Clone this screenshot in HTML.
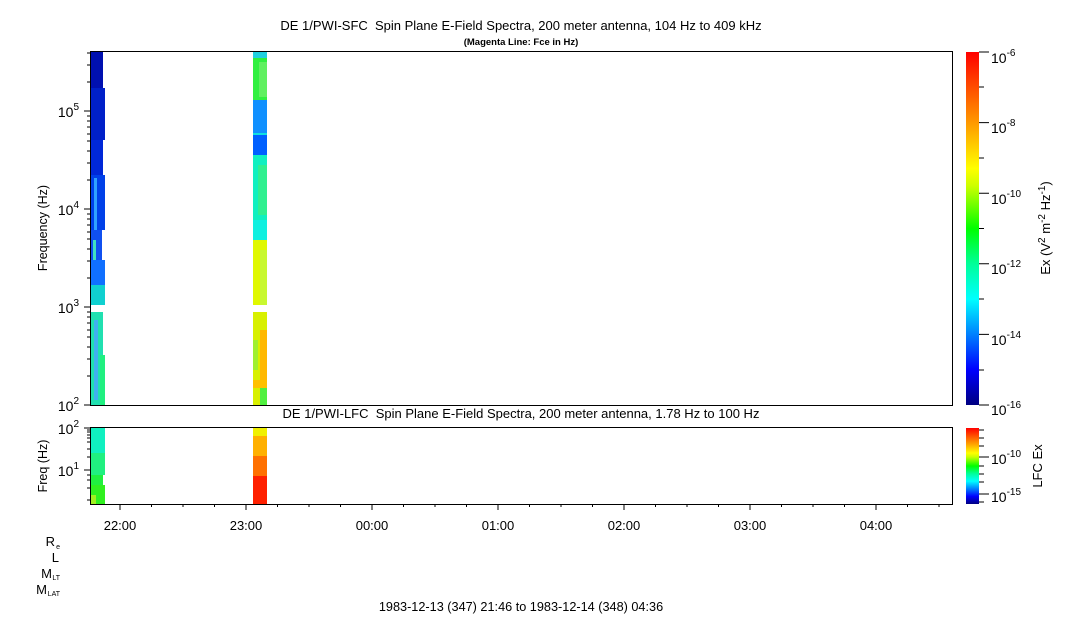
<!DOCTYPE html>
<html><head><meta charset="utf-8"><style>
html,body{margin:0;padding:0;background:#fff;}
svg text{font-family:"Liberation Sans",Arial,sans-serif;fill:#000;white-space:pre;}
</style></head><body>
<svg width="1083" height="620" xmlns="http://www.w3.org/2000/svg" xml:space="preserve">
<defs>
<linearGradient id="jet" x1="0" y1="1" x2="0" y2="0">
<stop offset="0" stop-color="#000080"/>
<stop offset="0.1" stop-color="#0000ff"/>
<stop offset="0.2" stop-color="#0080ff"/>
<stop offset="0.3" stop-color="#00ffff"/>
<stop offset="0.4" stop-color="#00ff99"/>
<stop offset="0.5" stop-color="#00ff00"/>
<stop offset="0.62" stop-color="#ccff00"/>
<stop offset="0.67" stop-color="#ffff00"/>
<stop offset="0.8" stop-color="#ff9900"/>
<stop offset="1" stop-color="#ff0000"/>
</linearGradient>
</defs>
<text x="521" y="30" font-size="13" text-anchor="middle">DE 1/PWI-SFC  Spin Plane E-Field Spectra, 200 meter antenna, 104 Hz to 409 kHz</text>
<text x="521" y="45" font-size="9.5" font-weight="bold" text-anchor="middle">(Magenta Line: Fce in Hz)</text>

<rect x="90" y="51" width="13" height="50" fill="#0010b0"/>
<rect x="90" y="88" width="15" height="52" fill="#0020c8"/>
<rect x="90" y="140" width="13" height="35" fill="#0028d8"/>
<rect x="90" y="175" width="15" height="55" fill="#0040e8"/>
<rect x="94" y="178" width="3" height="60" fill="#30a0ff"/>
<rect x="90" y="230" width="12" height="30" fill="#1050f0"/>
<rect x="93" y="240" width="3" height="30" fill="#40e0c0"/>
<rect x="90" y="260" width="15" height="30" fill="#1070ff"/>
<rect x="90" y="285" width="15" height="20" fill="#10d0d0"/>
<rect x="90" y="312" width="13" height="93" fill="#20e0b0"/>
<rect x="94" y="320" width="4" height="80" fill="#40b0f0"/>
<rect x="100" y="355" width="5" height="50" fill="#20f080"/>
<rect x="253" y="51" width="14" height="8" fill="#20d0e0"/>
<rect x="253" y="58" width="14" height="42" fill="#30f040"/>
<rect x="259" y="62" width="8" height="35" fill="#60f060"/>
<rect x="253" y="100" width="14" height="33" fill="#1090ff"/>
<rect x="253" y="133" width="14" height="3" fill="#10e0e0"/>
<rect x="253" y="135" width="14" height="20" fill="#0060ff"/>
<rect x="253" y="155" width="14" height="65" fill="#10f0c0"/>
<rect x="258" y="165" width="9" height="50" fill="#30f090"/>
<rect x="253" y="220" width="14" height="20" fill="#10f0e0"/>
<rect x="253" y="240" width="14" height="65" fill="#e0f800"/>
<rect x="260" y="250" width="7" height="55" fill="#c8f830"/>
<rect x="253" y="312" width="14" height="93" fill="#d8f000"/>
<rect x="260" y="330" width="7" height="50" fill="#ffb800"/>
<rect x="253" y="340" width="5" height="30" fill="#a0f030"/>
<rect x="253" y="380" width="14" height="8" fill="#ffc000"/>
<rect x="260" y="388" width="7" height="17" fill="#50f040"/>

<rect x="90.5" y="51.5" width="862" height="354" fill="none" stroke="#000"/>
<g stroke="#000">
<line x1="84" y1="405" x2="90" y2="405"/><line x1="84" y1="307" x2="90" y2="307"/><line x1="84" y1="209" x2="90" y2="209"/><line x1="84" y1="111" x2="90" y2="111"/>
<path d="M87 376H90M87 359H90M87 347H90M87 337H90M87 330H90M87 323H90M87 317H90M87 312H90M87 278H90M87 261H90M87 249H90M87 239H90M87 232H90M87 225H90M87 219H90M87 214H90M87 180H90M87 163H90M87 151H90M87 141H90M87 134H90M87 127H90M87 121H90M87 116H90M87 82H90M87 65H90M87 53H90"/>
</g>
<g font-size="14" text-anchor="end">
<text x="79" y="411">10<tspan font-size="10" dy="-7">2</tspan></text>
<text x="79" y="313">10<tspan font-size="10" dy="-7">3</tspan></text>
<text x="79" y="215">10<tspan font-size="10" dy="-7">4</tspan></text>
<text x="79" y="117">10<tspan font-size="10" dy="-7">5</tspan></text>
</g>
<text transform="translate(47,228) rotate(-90)" font-size="12.5" text-anchor="middle">Frequency (Hz)</text>

<rect x="966" y="52" width="13" height="353" fill="url(#jet)"/>
<g stroke="#000"><path d="M979 52H989M979 122.6H989M979 193.2H989M979 263.8H989M979 334.4H989M979 405H989M979 87H984M979 158H984M979 228.5H984M979 299H984M979 370H984"/></g>
<g font-size="14">
<text x="991" y="63">10<tspan font-size="10" dy="-7">-6</tspan></text>
<text x="991" y="133">10<tspan font-size="10" dy="-7">-8</tspan></text>
<text x="991" y="204">10<tspan font-size="10" dy="-7">-10</tspan></text>
<text x="991" y="274">10<tspan font-size="10" dy="-7">-12</tspan></text>
<text x="991" y="345">10<tspan font-size="10" dy="-7">-14</tspan></text>
<text x="991" y="415">10<tspan font-size="10" dy="-7">-16</tspan></text>
</g>
<text transform="translate(1050,228) rotate(-90)" font-size="13" text-anchor="middle">Ex (V<tspan font-size="10" dy="-5">2</tspan><tspan dy="5"> m</tspan><tspan font-size="10" dy="-5">-2</tspan><tspan dy="5"> Hz</tspan><tspan font-size="10" dy="-5">-1</tspan><tspan dy="5">)</tspan></text>

<text x="521" y="418" font-size="13" text-anchor="middle">DE 1/PWI-LFC  Spin Plane E-Field Spectra, 200 meter antenna, 1.78 Hz to 100 Hz</text>
<rect x="90" y="428" width="15" height="25" fill="#10f0c0"/>
<rect x="90" y="453" width="15" height="22" fill="#20f080"/>
<rect x="90" y="475" width="13" height="10" fill="#20f040"/>
<rect x="90" y="485" width="15" height="20" fill="#30f020"/>
<rect x="90" y="495" width="6" height="10" fill="#a0f020"/>
<rect x="253" y="428" width="14" height="8" fill="#f0f000"/>
<rect x="253" y="436" width="14" height="20" fill="#ffb000"/>
<rect x="253" y="456" width="14" height="20" fill="#ff7000"/>
<rect x="253" y="476" width="14" height="29" fill="#ff2000"/>
<rect x="90.5" y="427.5" width="862" height="77" fill="none" stroke="#000"/>
<g stroke="#000">
<line x1="84" y1="428" x2="90" y2="428"/><line x1="84" y1="470" x2="90" y2="470"/>
<path d="M87 488H90M87 480H90M87 475H90M87 457H90M87 449H90M87 442H90M87 438H90M87 435H90M87 432H90M87 430H90M87 500H90"/>
<path d="M120 504V510M246 504V510M372 504V510M498 504V510M624 504V510M750 504V510M876 504V510"/>
<path d="M151.5 504V507M183 504V507M214.5 504V507M277.5 504V507M309 504V507M340.5 504V507M403.5 504V507M435 504V507M466.5 504V507M529.5 504V507M561 504V507M592.5 504V507M655.5 504V507M687 504V507M718.5 504V507M781.5 504V507M813 504V507M844.5 504V507M907.5 504V507M939 504V507"/>
</g>
<g font-size="14" text-anchor="end">
<text x="79" y="434">10<tspan font-size="10" dy="-7">2</tspan></text>
<text x="79" y="476">10<tspan font-size="10" dy="-7">1</tspan></text>
</g>
<text transform="translate(47,466) rotate(-90)" font-size="12.5" text-anchor="middle">Freq (Hz)</text>
<rect x="966" y="428" width="13" height="76" fill="url(#jet)"/>
<g stroke="#000"><path d="M979 457H989M979 494H989M979 430H984M979 438H984M979 446H984M979 466H984M979 474H984M979 482H984M979 502H984"/></g>
<g font-size="14">
<text x="991" y="464">10<tspan font-size="10" dy="-7">-10</tspan></text>
<text x="991" y="502">10<tspan font-size="10" dy="-7">-15</tspan></text>
</g>
<text transform="translate(1042,466) rotate(-90)" font-size="13" text-anchor="middle">LFC Ex</text>

<g font-size="13" text-anchor="middle">
<text x="120" y="530">22:00</text><text x="246" y="530">23:00</text><text x="372" y="530">00:00</text><text x="498" y="530">01:00</text><text x="624" y="530">02:00</text><text x="750" y="530">03:00</text><text x="876" y="530">04:00</text>
</g>
<g font-size="13" text-anchor="end">
<text x="55" y="546">R</text><text x="60" y="549" font-size="7">e</text>
<text x="59" y="562">L</text>
<text x="52" y="578">M</text><text x="60" y="580" font-size="7">LT</text>
<text x="47" y="594">M</text><text x="60" y="596" font-size="7">LAT</text>
</g>
<text x="521" y="611" font-size="12.7" text-anchor="middle">1983-12-13 (347) 21:46 to 1983-12-14 (348) 04:36</text>
</svg>
</body></html>
